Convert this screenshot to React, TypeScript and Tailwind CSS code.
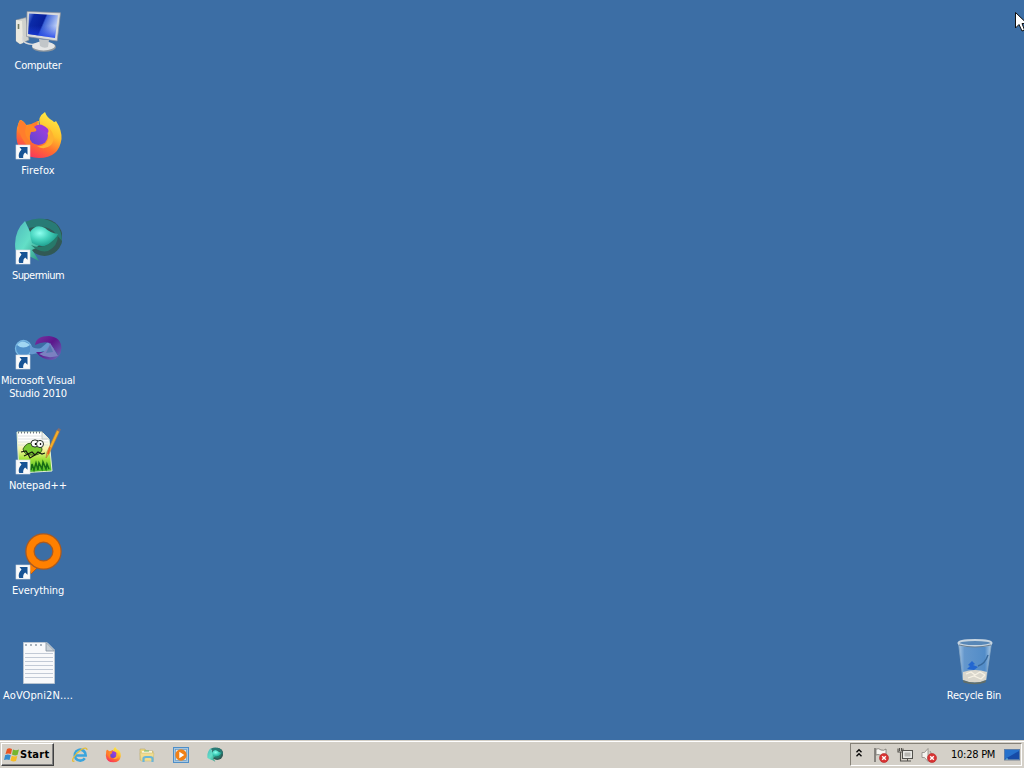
import type { ReactNode } from 'react'
import clsx from 'clsx'

const UI_FONT = "font-['DejaVu_Sans_Condensed','DejaVu_Sans',Tahoma,sans-serif]"

function ShortcutArrow() {
  return (
    <g>
      <rect x="2" y="33" width="14" height="14" fill="#fafafa" stroke="#d3dce6" strokeWidth=".6" />
      <path d="M5.500 35H13.500V42.800L11.200 40.500Q8.800 42.200 9.200 46H5.200Q3.500 42 7.500 37.500Z" fill="#175394" />
    </g>
  )
}

function ComputerIcon() {
  return (
    <svg viewBox="0 0 48 48" className="size-12">
      <defs>
        <linearGradient id="pc-screen" x1="0" y1="0" x2="1" y2=".35">
          <stop offset="0" stopColor="#6d8fe6" />
          <stop offset=".2" stopColor="#0b2ba9" />
          <stop offset=".55" stopColor="#061f9b" />
          <stop offset=".6" stopColor="#3d64d7" />
          <stop offset="1" stopColor="#bacdf8" />
        </linearGradient>
        <linearGradient id="pc-low" x1="0" y1="0" x2="0" y2="1">
          <stop offset=".5" stopColor="#2345df" stopOpacity="0" />
          <stop offset="1" stopColor="#173be9" stopOpacity=".85" />
        </linearGradient>
      </defs>
      <path d="M2 13 12 10.500 15 33 6 37 2 34Z" fill="#cfd1cc" stroke="#888f95" strokeWidth=".6" />
      <path d="M2 13 8 14 9 36 6 37 2 34Z" fill="#e9e8df" />
      <path d="M4.500 17v5" stroke="#737a62" strokeWidth="1.600" />
      <path d="M9 29q-2 5 3 7t9 1" fill="none" stroke="#d8dadd" strokeWidth="1.400" />
      <ellipse cx="30" cy="40" rx="12" ry="4.800" fill="#8e969d" />
      <ellipse cx="29.500" cy="39" rx="11.500" ry="4.400" fill="#e5e6e6" />
      <path d="M25 32 35 33 34 40Q30 42 26 39Z" fill="#c2c6c9" />
      <path d="M13 4.500 46.500 5.800 43.200 34 12.500 29.500Z" fill="#d9dbdc" stroke="#858d9b" strokeWidth=".7" />
      <path d="M15 6.500 44 8.300 41 31 14.200 27Z" fill="url(#pc-screen)" />
      <path d="M15 6.500 44 8.300 41 31 14.200 27Z" fill="url(#pc-low)" />
    </svg>
  )
}

function FirefoxArt({ id }: { id: string }) {
  return (
    <>
      <defs>
        <linearGradient id={`${id}-body`} x1=".8" y1="0" x2=".3" y2="1">
          <stop offset="0" stopColor="#fff14a" />
          <stop offset=".4" stopColor="#ffc02c" />
          <stop offset=".68" stopColor="#ff702f" />
          <stop offset="1" stopColor="#f8315f" />
        </linearGradient>
        <linearGradient id={`${id}-globe`} x1="1" y1="0" x2="0" y2="1">
          <stop offset="0" stopColor="#a53fe0" />
          <stop offset="1" stopColor="#5b45cd" />
        </linearGradient>
      </defs>
      <path d="M6 8Q9 8 12 13 16 12 20 13 22 9 25 9 24 12 26 13 23 5 31 0 33 6 39 9 40 11 42 9 48 18 47.500 27 45 46 25 46 4 45 2.500 26 2 14 6 8Z" fill={`url(#${id}-body)`} />
      <path d="M6 8Q10 9 13 14 19 11 24 9 24 13 22 16L15 19Q18 26 15 36 5 25 4 13Z" fill="#ff7d2c" />
      <circle cx="24.500" cy="23.500" r="9.500" fill={`url(#${id}-globe)`} />
      <path d="M12 14Q18 11 22 17 24 20 17 20 15 24 16 29 9 24 12 14Z" fill="#ff8a26" />
      <path d="M20 15Q26 9 34 17 35 19 34 21 29 17 25 18Z" fill="#9c39d7" />
      <path d="M33 14Q39 21 34 28 31 35 23 34 30 39 37 33 44 24 33 14Z" fill="#ffb130" />
    </>
  )
}

function FirefoxIcon() {
  return (
    <svg viewBox="0 0 48 48" className="size-12">
      <FirefoxArt id="fx" />
      <ShortcutArrow />
    </svg>
  )
}

function SupermiumArt({ id }: { id: string }) {
  return (
    <>
      <defs>
        <radialGradient id={`${id}-orb`} cx=".35" cy=".35" r=".75">
          <stop offset="0" stopColor="#8effef" />
          <stop offset=".45" stopColor="#45d3bd" />
          <stop offset="1" stopColor="#159283" />
        </radialGradient>
        <linearGradient id={`${id}-leaf`} x1="0" y1="0" x2="1" y2="1">
          <stop offset="0" stopColor="#4fb9bb" />
          <stop offset=".5" stopColor="#63dfc7" />
          <stop offset="1" stopColor="#29917c" />
        </linearGradient>
      </defs>
      <ellipse cx="30.500" cy="20.500" rx="18" ry="18.500" fill="#315955" />
      <path d="M11 5Q27-3 42 7 48 14 48 24L42 17Q34 6 15 11Z" fill="#287b75" />
      <path d="M11 4Q-1 15 1.500 33 7 37 17 40L25 44Q21 37 18 33 23 31 26 27L17 17Z" fill={`url(#${id}-leaf)`} />
      <path d="M16 15Q22 6 31 11 36 16 44 17 42 25 36 28 26 31 18 26 16 20 16 15Z" fill={`url(#${id}-orb)`} />
      <path d="M17 28Q31 35 44 18 44 29 34 34 25 36 17 28Z" fill="#27796a" />
    </>
  )
}

function SupermiumIcon() {
  return (
    <svg viewBox="0 0 48 48" className="size-12">
      <SupermiumArt id="sm" />
      <ShortcutArrow />
    </svg>
  )
}

function VisualStudioIcon() {
  return (
    <svg viewBox="0 0 48 48" className="size-12">
      <defs>
        <linearGradient id="vs-right" x1="0" y1="0" x2="1" y2="1">
          <stop offset="0" stopColor="#7a329f" />
          <stop offset=".45" stopColor="#5d168c" />
          <stop offset="1" stopColor="#6b74bd" />
        </linearGradient>
      </defs>
      <circle cx="9.500" cy="26.500" r="8" fill="#4f8fc9" stroke="#77b7e2" strokeWidth="1.300" />
      <path d="M3 23Q8 16 16 23 9 28 3 23Z" fill="#a0d6f2" />
      <path d="M16 23Q21 28 27 26L34 20 40 27 35 31 29 29Q22 33 16 32Z" fill="#6799d0" />
      <path d="M21 23Q22 14 35 14 47 15 47.500 26 47 36 38 38 28 38 22 30L29 30 35 34 44 33 36 21Q29 19 21 23Z" fill="url(#vs-right)" />
      <path d="M36 21 44 34Q33 37 25 32 34 29 36 21Z" fill="#7b80c1" />
      <path d="M36 23 39 30 32 31Z" fill="#5478b2" />
      <ShortcutArrow />
    </svg>
  )
}

function NotepadIcon() {
  return (
    <svg viewBox="0 0 48 48" className="size-12">
      <defs>
        <linearGradient id="np-page" x1="0" y1="0" x2="0" y2="1">
          <stop offset=".2" stopColor="#ffffff" />
          <stop offset=".45" stopColor="#f3f39a" />
          <stop offset=".65" stopColor="#a5e43c" />
          <stop offset="1" stopColor="#39b023" />
        </linearGradient>
      </defs>
      <path d="M3 5H28L35 12 38 44 5 46Z" fill="url(#np-page)" stroke="#e3f1d2" strokeWidth="1" />
      <path d="M4 5.500H29" stroke="#6c7883" strokeWidth="2" strokeDasharray="1 2" />
      <path d="M4 9H30M4 12H33M4 15h30M4 18h30" stroke="#d8dddc" strokeWidth=".8" />
      <path d="M28 5v7h7" fill="#e9eeec" stroke="#b5bdb8" strokeWidth=".7" />
      <path d="M9 22Q13 14 20 17 28 16 28 23 26 29 17 28 10 28 9 22Z" fill="#79c931" stroke="#365f1c" strokeWidth="1" />
      <ellipse cx="21" cy="16.500" rx="4" ry="3.600" fill="#fff" stroke="#29332b" />
      <ellipse cx="26" cy="17" rx="3.500" ry="3.600" fill="#fff" stroke="#29332b" />
      <path d="M21.500 16v2M26.500 16v2" stroke="#111" strokeWidth="1.300" />
      <path d="m7 25 5-1 2 3 4-2 3 3 3-3 4 2 3-1M10 29l4-2 2 4 5-3" fill="none" stroke="#15190e" strokeWidth="1.200" />
      <path d="m17 43 1-6 2 6 2-7 2 7 1-7 3 6 1-7 3 7 1-5 2 5" fill="none" stroke="#176b15" strokeWidth="1.500" />
      <path d="M45.500 4.500 35 27 32 31 33 25 43 3Z" fill="#f5ad27" stroke="#a9793e" strokeWidth=".6" />
      <path d="m36 20-2 7" stroke="#e45f2b" strokeWidth="1.500" />
      <path d="M43 3 44.500 1 47 2.500 45.500 5Z" fill="#846e6d" />
      <ShortcutArrow />
    </svg>
  )
}

function EverythingIcon() {
  return (
    <svg viewBox="0 0 48 48" className="size-12">
      <path d="M17 29 15 37 17 42 25 34" fill="#ff8000" stroke="#a95b20" />
      <circle cx="29.500" cy="19.500" r="13.500" fill="none" stroke="#a75a23" strokeWidth="9.500" />
      <circle cx="29.500" cy="19.500" r="13.500" fill="none" stroke="#ff8000" strokeWidth="7" />
      <ShortcutArrow />
    </svg>
  )
}

function TextFileIcon() {
  return (
    <svg viewBox="0 0 48 48" className="size-12">
      <path d="M9.500 5.500H33L40.500 13V46.500H9.500Z" fill="#f8f9fb" stroke="#b8c4d1" />
      <path d="M11 8H31" stroke="#a9b3bd" strokeWidth="2" strokeDasharray="2 3" />
      <path d="M11 16.500h28M11 20.500h28M11 24.500h28M11 28.500h28M11 32.500h28M11 36.500h28M11 40.500h28" stroke="#c2cad6" />
      <path d="M32 5.500V14H40.500Z" fill="#c8d0d7" stroke="#80909e" strokeWidth=".8" />
    </svg>
  )
}

function RecycleBinIcon() {
  return (
    <svg viewBox="0 0 48 48" className="size-12">
      <defs>
        <linearGradient id="bin-glass" x1="0" y1="0" x2="1" y2="0">
          <stop offset="0" stopColor="#a8c7e5" />
          <stop offset=".18" stopColor="#6497cc" />
          <stop offset=".8" stopColor="#528cc8" />
          <stop offset="1" stopColor="#b3cfe8" />
        </linearGradient>
      </defs>
      <path d="M8.500 6 13 43Q25 49 36 43L41.500 6Z" fill="url(#bin-glass)" stroke="#86a7c4" strokeWidth=".8" />
      <path d="M13 35Q25 31 37 35L36 43Q25 48 13 43Z" fill="#d9d6cc" />
      <path d="m16 37 5-2 4 3 5-3 5 3M18 41l6-2 7 3 4-4" fill="none" stroke="#f6f1e4" strokeWidth="1.300" />
      <path d="M13 43Q25 48 36 43L35.500 45.500Q25 49 13.500 45.500Z" fill="#626e68" />
      <path d="m22 24 3 3-2 1 5 2-4 3-7-1 3-3-2-1Z" fill="#2367d0" />
      <path d="M28 29Q35 27 38 18" fill="none" stroke="#37699c" strokeWidth="1.400" />
      <ellipse cx="25" cy="6" rx="16.500" ry="3" fill="#5887b7" stroke="#c7d5e1" strokeWidth="2" />
      <path d="M9 8Q25 12 41 8" fill="none" stroke="#697e91" />
    </svg>
  )
}

type DesktopItem = {
  name: string
  icon: ReactNode
  lines: { text: string; tracking: string }[]
}

const SHORTCUTS: DesktopItem[] = [
  { name: 'computer', icon: <ComputerIcon />, lines: [{ text: 'Computer', tracking: 'tracking-[-0.3px]' }] },
  { name: 'firefox', icon: <FirefoxIcon />, lines: [{ text: 'Firefox', tracking: 'tracking-[0.15px]' }] },
  { name: 'supermium', icon: <SupermiumIcon />, lines: [{ text: 'Supermium', tracking: 'tracking-[-0.55px]' }] },
  {
    name: 'vs2010',
    icon: <VisualStudioIcon />,
    lines: [
      { text: 'Microsoft Visual', tracking: 'tracking-[-0.22px]' },
      { text: 'Studio 2010', tracking: 'tracking-[-0.2px]' },
    ],
  },
  { name: 'notepad', icon: <NotepadIcon />, lines: [{ text: 'Notepad++', tracking: 'tracking-[-0.05px]' }] },
  { name: 'everything', icon: <EverythingIcon />, lines: [{ text: 'Everything', tracking: 'tracking-[-0.15px]' }] },
  { name: 'textfile', icon: <TextFileIcon />, lines: [{ text: 'AoVOpni2N....', tracking: 'tracking-[0.1px]' }] },
]

const RECYCLE_BIN: DesktopItem = {
  name: 'recycle',
  icon: <RecycleBinIcon />,
  lines: [{ text: 'Recycle Bin', tracking: 'tracking-[-0.25px]' }],
}

function DesktopIcon({ item }: { item: DesktopItem }) {
  return (
    <div className="flex h-[105px] w-[76px] flex-col items-center pt-[7px]">
      {item.icon}
      <div className="mt-1 flex flex-col items-center text-[11px] leading-[13px] whitespace-nowrap text-white">
        {item.lines.map((line) => (
          <span key={line.text} className={line.tracking}>{line.text}</span>
        ))}
      </div>
    </div>
  )
}

function WindowsFlag() {
  return (
    <svg viewBox="0 0 16 16" className="size-4">
      <path d="M3 2Q5 .5 8 2L7 7Q4 6 1.500 7Z" fill="#e95522" />
      <path d="M9 2.500Q12 4 15 2.500L13.500 8Q11 9 8 7.500Z" fill="#75b52f" />
      <path d="M1.200 8Q4 7 6.800 8.200L5.500 13Q3 12 0 13Z" fill="#348bce" />
      <path d="M7.800 8.700Q10.500 10 13.300 9L12 14Q9 15 6.500 13.500Z" fill="#f6bc25" />
    </svg>
  )
}

function ExplorerIcon() {
  return (
    <svg viewBox="0 0 16 16" className="size-4">
      <path d="M12.800 11.200A5.500 5.500 0 1 1 13.700 8.500H4" fill="none" stroke="#3aa4dd" strokeWidth="2.600" />
      <path d="M4 6.500Q6 3.500 9 4" fill="none" stroke="#91dbf5" />
      <path d="M2.500 14Q-.5 15.500 1.300 11 4 6 9.500 2.500 15-.5 15 3" fill="none" stroke="#e5bd38" strokeWidth="1.300" />
    </svg>
  )
}

function FolderIcon() {
  return (
    <svg viewBox="0 0 16 16" className="size-4">
      <path d="M1 2H6L7 4H14V13H1Z" fill="#eed77b" stroke="#b8aa6b" strokeWidth=".6" />
      <path d="M3 4H13V7H3Z" fill="#f9f5d7" />
      <path d="M5 4h5" stroke="#70bd69" />
      <path d="M1 6H15L14 14H2Z" fill="#f1dc8e" stroke="#c9b977" strokeWidth=".5" />
      <path d="M4.500 15V11.500Q4.500 10 7 10H11Q13.500 10 13.500 11.500V15" fill="none" stroke="#69b6d8" strokeWidth="2.200" />
    </svg>
  )
}

function MediaPlayerIcon() {
  return (
    <svg viewBox="0 0 16 16" className="size-4">
      <rect x=".5" y=".5" width="15" height="15" fill="#a9c7df" stroke="#4e8fc9" />
      <rect x="2.500" y="2.500" width="11" height="11" fill="#dce6ec" stroke="#6599c4" strokeWidth=".7" />
      <circle cx="8" cy="8" r="5.700" fill="#f18117" />
      <path d="m6.300 4.800 5 3.200-5 3.200Z" fill="#fff" />
    </svg>
  )
}

function ErrorBadge() {
  return (
    <g>
      <circle cx="11" cy="11" r="4.500" fill="#d93434" stroke="#b52629" strokeWidth=".6" />
      <path d="m9.200 9.200 3.600 3.600m0-3.600-3.600 3.600" stroke="#fff" strokeWidth="1.400" />
    </g>
  )
}

function SystemTray() {
  return (
    <div className="mr-0.5 flex h-[23px] w-[172px] items-center border border-t-[#858178] border-r-white border-b-white border-l-[#858178]">
      <svg viewBox="0 0 8 10" className="mb-[3px] ml-1 h-2.5 w-2">
        <path d="m1.500 4.300 2.500-2.500 2.500 2.500m-5 4 2.500-2.500 2.500 2.500" fill="none" stroke="#080808" strokeWidth="1.400" />
      </svg>
      <svg viewBox="0 0 16 16" className="ml-2.5 size-4">
        <path d="M2 1V15" stroke="#6f6d69" strokeWidth="1.500" />
        <path d="M3 2Q6 1 8 3 11 4 13 2V9Q10 10 7 8 5 7 3 8Z" fill="#f7f6f2" stroke="#74716c" strokeWidth=".8" />
        <ErrorBadge />
      </svg>
      <svg viewBox="0 0 16 16" className="ml-2 size-4">
        <path d="M1 1.500V5H6V1.500M2.500 1v3M4.500 1v3M3.500 5V14H8" fill="none" stroke="#55534e" strokeWidth="1.100" />
        <rect x="5.500" y="3.500" width="10" height="8" fill="#deddd8" stroke="#53524e" />
        <rect x="7" y="5" width="7" height="5" fill="#b8b7b2" stroke="#fff" strokeWidth=".7" />
        <path d="M8 14h6M10.500 12v2" stroke="#55534e" />
      </svg>
      <svg viewBox="0 0 16 16" className="ml-2 size-4">
        <path d="M1 5.500H3.500L7 1.500V14.500L3.500 10.500H1Z" fill="#f5f4ef" stroke="#8a8781" strokeWidth=".8" />
        <path d="M9 4q2 2 1 5" fill="none" stroke="#99958e" />
        <ErrorBadge />
      </svg>
      <span className="ml-3.5 w-[46px] text-[11px] leading-[13px] tracking-[-0.25px] whitespace-nowrap text-black">10:28 PM</span>
      <svg viewBox="0 0 16 14" className="ml-[7px] h-3.5 w-4">
        <rect x=".5" y="1.500" width="15" height="10" fill="#2671cc" stroke="#5b7eab" />
        <path d="M1 11 15 3V11Z" fill="#164ba7" />
        <path d="M0 12.500H16" stroke="#a5a9ad" />
        <path d="M2 11h2" stroke="#7bcae2" />
      </svg>
    </div>
  )
}

function Taskbar() {
  return (
    <div className="h-7 border-t border-[#d4d0c8] bg-[#d4d0c8]">
      <div className="flex h-[27px] items-start justify-between border-t border-white pt-px">
        <div className="flex items-start">
          <button className="ml-px flex h-[23px] w-[53px] items-center border border-t-white border-r-[#404040] border-b-[#404040] border-l-white pl-0.5 shadow-[inset_-1px_-1px_#808080]">
            <WindowsFlag />
            <span className="text-[11px] leading-[13px] font-bold tracking-[0.25px] text-black">Start</span>
          </button>
          <div className="ml-[18px] flex h-6 items-center">
            <ExplorerIcon />
            <svg viewBox="0 0 48 48" className="ml-[17px] size-4">
              <FirefoxArt id="fx-small" />
            </svg>
            <div className="ml-[18px]"><FolderIcon /></div>
            <div className="ml-[18px]"><MediaPlayerIcon /></div>
            <svg viewBox="0 0 48 48" className="ml-[18px] size-4">
              <SupermiumArt id="sm-small" />
            </svg>
          </div>
        </div>
        <SystemTray />
      </div>
    </div>
  )
}

function Cursor() {
  return (
    <svg viewBox="0 0 12 20" className="absolute top-3 left-[1015px] h-5 w-3">
      <path d="M.5.500V16L4 12.500 7 19 9.500 18 7 11.500H12Z" fill="#fff" stroke="#111" />
    </svg>
  )
}

export default function App() {
  return (
    <main className={clsx('relative flex h-[768px] w-[1024px] flex-col overflow-hidden bg-[#3c6ea5] select-none', UI_FONT)}>
      <div className="flex min-h-0 flex-1 justify-between">
        <div className="flex flex-col">
          {SHORTCUTS.map((item) => (
            <DesktopIcon key={item.name} item={item} />
          ))}
        </div>
        <div className="mt-[630px] mr-3">
          <DesktopIcon item={RECYCLE_BIN} />
        </div>
      </div>
      <Taskbar />
      <Cursor />
    </main>
  )
}
